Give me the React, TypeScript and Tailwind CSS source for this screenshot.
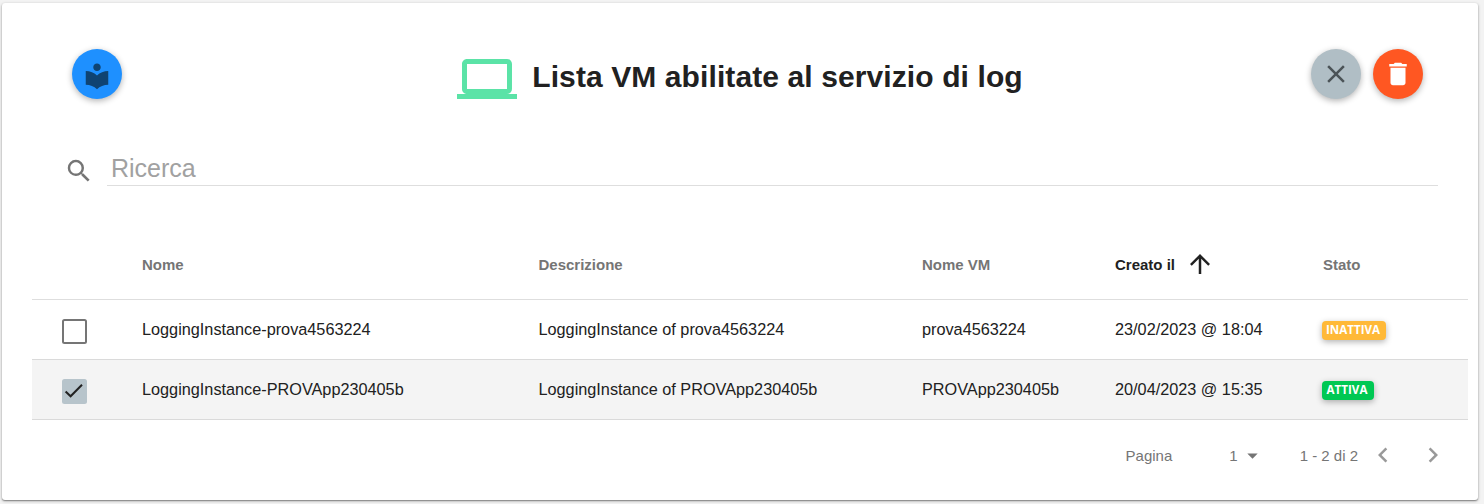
import React from "react";
import {
  MdArrowDropDown,
  MdArrowUpward,
  MdClose,
  MdComputer,
  MdDelete,
  MdKeyboardArrowLeft,
  MdKeyboardArrowRight,
  MdLocalLibrary,
  MdSearch,
} from "react-icons/md";

type Row = { name: string; description: string; vm: string; created: string; active: boolean; checked: boolean };

const rows: Row[] = [
  {
    name: "LoggingInstance-prova4563224",
    description: "LoggingInstance of prova4563224",
    vm: "prova4563224",
    created: "23/02/2023 @ 18:04",
    active: false,
    checked: false,
  },
  {
    name: "LoggingInstance-PROVApp230405b",
    description: "LoggingInstance of PROVApp230405b",
    vm: "PROVApp230405b",
    created: "20/04/2023 @ 15:35",
    active: true,
    checked: true,
  },
];

const columns = "grid grid-cols-[110px_396.5px_383.5px_193px_208px_1fr] items-center";

function RoundButton({ className, label, children }: { className: string; label: string; children: React.ReactNode }) {
  return (
    <button
      aria-label={label}
      className={`flex size-[50px] items-center justify-center rounded-full shadow-[0_2px_6px_rgba(0,0,0,0.3)] ${className}`}
    >
      {children}
    </button>
  );
}

function Checkbox({ checked }: { checked: boolean }) {
  return (
    <span
      role="checkbox"
      aria-checked={checked}
      className={`mt-[3px] ml-[30px] flex size-[25px] items-center justify-center rounded-[2.5px] ${
        checked ? "bg-[#b7c4cb]" : "border-2 border-[#757575]"
      }`}
    >
      {checked && (
        <svg viewBox="0 0 25 25" className="size-[25px]" fill="none" stroke="#212121" strokeWidth="2">
          <path d="M3.6 12.5 L8.6 17.3 L20 5.7" />
        </svg>
      )}
    </span>
  );
}

function Status({ active }: { active: boolean }) {
  return (
    <span
      className={`mt-px -ml-px flex h-[19px] items-center justify-center rounded-[4px] pr-[2px] pb-px font-['Open_Sans',sans-serif] text-[11.6px] leading-none font-bold text-white shadow-[0_2px_6px_rgba(0,0,0,0.3)] ${
        active ? "w-[52px] bg-[#00c853]" : "w-[64px] bg-[#ffb938]"
      }`}
    >
      {active ? "ATTIVA" : "INATTIVA"}
    </span>
  );
}

export default function App() {
  return (
    <div className="h-[504px] bg-[#f3f3f3] pt-[3px] pl-[2px] font-['Liberation_Sans',Arial,sans-serif] text-[#212121]">
      <main className="h-[497px] w-[1476px] rounded-[3px] bg-white pt-[46px] shadow-[0_1px_3px_rgba(0,0,0,0.35),0_1px_1px_rgba(0,0,0,0.25)]">
        <header className="flex h-[50px] items-center justify-between pr-[55px] pl-[70px]">
          <RoundButton label="Guida" className="bg-[#1e90ff] text-[#0f4372]">
            <MdLocalLibrary className="mt-1 size-[30px]" />
          </RoundButton>
          <div className="ml-[47px] flex items-center">
            <MdComputer className="mt-[10px] size-[60px] text-[#5be3a7]" />
            <h1 className="mt-[5px] ml-[15px] text-[30px] leading-9 font-bold tracking-[0.1px] whitespace-nowrap">
              Lista VM abilitate al servizio di log
            </h1>
          </div>
          <div className="flex gap-3">
            <RoundButton label="Annulla" className="bg-[#b0bec5] text-[#4b5357]">
              <MdClose className="size-[30px]" />
            </RoundButton>
            <RoundButton label="Elimina" className="bg-[#ff5722] text-white">
              <MdDelete className="size-[30px]" />
            </RoundButton>
          </div>
        </header>

        <div className="mt-[47px] flex h-[40px] items-end pr-[40px] pl-[62px]">
          <MdSearch className="size-[30px] text-[#757575]" />
          <div className="ml-[13px] h-[39px] flex-1 border-b border-[#dedede] pt-[4px] pl-[4px] text-[25px] leading-[34px] text-[#a1a1a1]">
            Ricerca
          </div>
        </div>

        <section className="mt-[44px] mr-[10px] ml-[30px]">
          <div className={`${columns} h-[70px] border-b border-[#dedede] pt-px text-[15px] font-bold text-[#757575]`}>
            <span />
            <span>Nome</span>
            <span>Descrizione</span>
            <span>Nome VM</span>
            <span className="flex items-center text-[#212121]">
              Creato il
              <MdArrowUpward className="-mt-[3px] ml-[10px] size-[30px]" />
            </span>
            <span>Stato</span>
          </div>
          {rows.map((row) => (
            <div
              key={row.name}
              className={`${columns} h-[60px] border-b border-[#dadada] text-[16.25px] ${row.checked ? "bg-[#f4f4f4]" : ""}`}
            >
              <Checkbox checked={row.checked} />
              <span>{row.name}</span>
              <span>{row.description}</span>
              <span>{row.vm}</span>
              <span>{row.created}</span>
              <Status active={row.active} />
            </div>
          ))}
        </section>

        <footer className="flex h-[70px] items-center justify-end pr-[30px] text-[15px] text-[#757575]">
          <span className="pt-[2px]">Pagina</span>
          <span className="ml-[57px] pt-[2px]">1</span>
          <MdArrowDropDown className="ml-[2px] size-[25px]" />
          <span className="ml-[35px] pt-[2px]">1 - 2 di 2</span>
          <MdKeyboardArrowLeft className="ml-[10px] size-[30px] text-[#999999]" />
          <MdKeyboardArrowRight className="ml-[20px] size-[30px] text-[#999999]" />
        </footer>
      </main>
    </div>
  );
}
